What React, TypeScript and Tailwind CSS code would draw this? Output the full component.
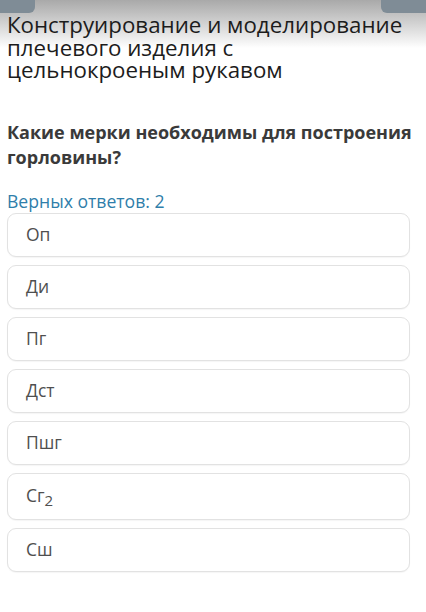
const options: { id: number; label: React.ReactNode; tall?: boolean }[] = [
  { id: 1, label: 'Оп' },
  { id: 2, label: 'Ди' },
  { id: 3, label: 'Пг' },
  { id: 4, label: 'Дст' },
  { id: 5, label: 'Пшг' },
  {
    id: 6,
    label: (
      <>
        Сг<sub className="text-[15px]">2</sub>
      </>
    ),
    tall: true,
  },
  { id: 7, label: 'Сш' },
];

function App() {
  return (
    <div
      className="relative min-h-[612px] w-[426px] overflow-hidden bg-white"
      style={{ fontFamily: '"Open Sans", "Noto Sans", sans-serif' }}
    >
      {/* top fade of the page behind */}
      <div className="absolute inset-x-0 top-0 h-[48px] bg-gradient-to-b from-[#a9a9a9] to-white" />
      <div className="absolute left-0 top-0 h-[13px] w-[35px] rounded-br-[6px] bg-[#7f8c96]" />
      <div className="absolute right-0 top-0 h-[13px] w-[45px] rounded-bl-[6px] bg-[#7f8c96]" />

      <div className="relative flex flex-col px-[7px] pt-[14px]">
        <h1 className="w-[405px] text-[22.3px] leading-[22.5px] font-normal text-[#1c1c1c]">
          Конструирование и моделирование плечевого изделия с цельнокроеным рукавом
        </h1>

        <p className="mt-[38px] text-[18px] leading-[25px] font-bold text-[#3a3a3a]">
          Какие мерки необходимы для построения горловины?
        </p>

        <p className="mt-[19px] text-[17.6px] leading-[24px] text-[#2f7eaa]">Верных ответов: 2</p>

        <div className="mt-0 flex w-[403px] flex-col gap-[8px]">
          {options.map((opt) => (
            <div
              key={opt.id}
              className={`flex items-center rounded-[9px] border border-[#e2e2e2] bg-white px-[18px] pb-[2px] text-[17.5px] text-[#4f4f4f] shadow-[0_1px_1px_rgba(0,0,0,0.04)] ${
                opt.tall ? 'min-h-[47px]' : 'min-h-[44px]'
              }`}
            >
              <span className="leading-[24px]">{opt.label}</span>
            </div>
          ))}
        </div>
      </div>
    </div>
  );
}

export default App;
